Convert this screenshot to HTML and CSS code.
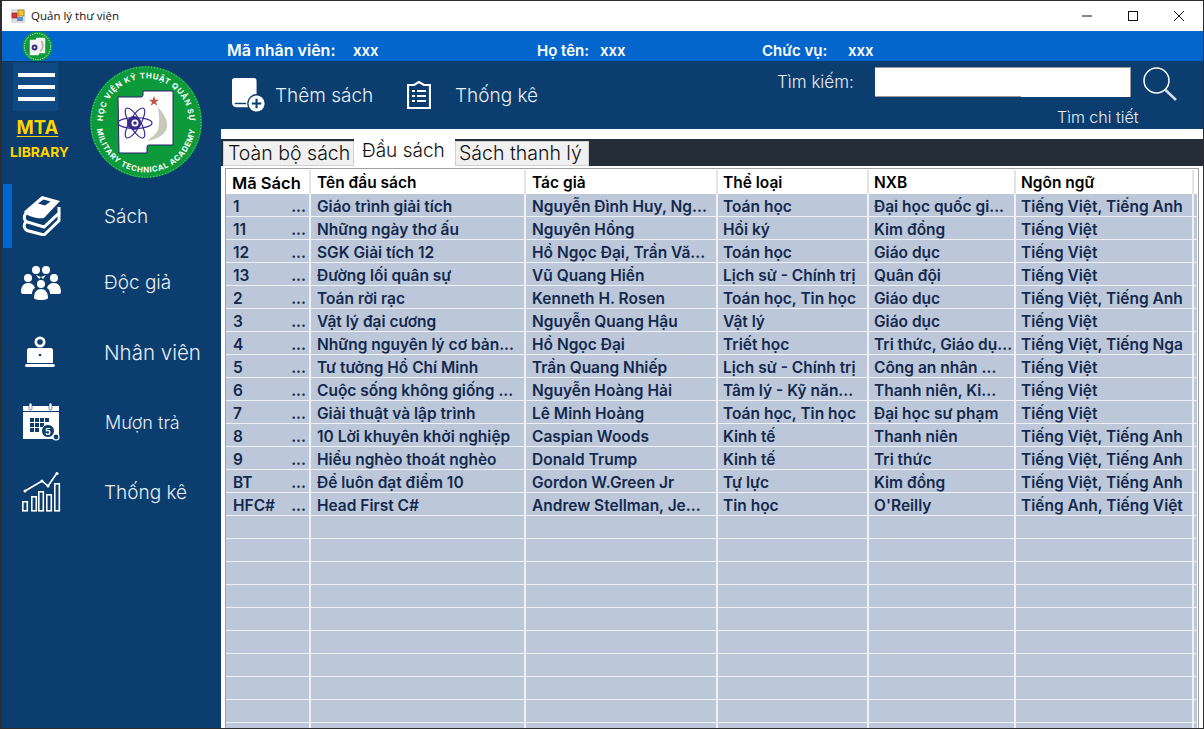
FILE: index.html
```html
<!DOCTYPE html>
<html lang="vi">
<head>
<meta charset="utf-8">
<title>Quản lý thư viện</title>
<link rel="stylesheet" href="styles.css">
</head>
<body>
<div class="window">
  <header class="titlebar">
    <svg class="app-icon" viewBox="0 0 14 14"><rect x="0" y="0" width="14" height="14" fill="#ddd"/><rect x="7" y="1" width="6" height="6" fill="#f2c12e" stroke="#8a6a10" stroke-width=".6"/><rect x="1" y="4" width="5" height="5" fill="#d33" stroke="#722" stroke-width=".6"/><rect x="6" y="8" width="6" height="4" fill="#5b8fd6"/></svg>
    <span class="title">Quản lý thư viện</span>
    <div class="controls">
      <svg viewBox="0 0 12 12"><path d="M1 6h10" stroke="#111" fill="none"/></svg>
      <svg viewBox="0 0 12 12"><rect x="1.5" y="1.5" width="9" height="9" stroke="#111" fill="none"/></svg>
      <svg viewBox="0 0 12 12"><path d="M1 1l10 10M11 1L1 11" stroke="#111" fill="none"/></svg>
    </div>
  </header>
  <div class="infobar">
    <svg class="mini-logo" viewBox="0 0 32 32"><circle cx="16" cy="16" r="15.5" fill="#0f9a3c"/><circle cx="16" cy="16" r="13.500" fill="none" stroke="#fff" stroke-width="1" stroke-dasharray="1 1.5"/><path d="M8 9h6l1-2h9v16h-6l-1 2H8z" fill="#f4f4f4"/><circle cx="13" cy="17" r="3" fill="#3c2a80"/><circle cx="13" cy="17" r="1" fill="#fff"/><path d="M20 10c2 3 2 8-1 11" stroke="#b8b8a8" stroke-width="2" fill="none"/></svg>
    <span class="info-label l1">Mã nhân viên:</span><span class="info-val v1">xxx</span>
    <span class="info-label l2">Họ tên:</span><span class="info-val v2">xxx</span>
    <span class="info-label l3">Chức vụ:</span><span class="info-val v3">xxx</span>
  </div>
  <div class="body">
    <aside class="sidebar">
      <div class="brandrow">
        <div class="brand">
          <div class="hamburger"><i></i><i></i><i></i></div>
          <div class="mta">MTA</div>
          <div class="library">LIBRARY</div>
        </div>
        <svg class="logo" viewBox="0 0 112 112">
          <defs>
            <path id="arcTop" d="M13.500 62A43 43 0 1 1 98.500 62"/>
            <path id="arcBot" d="M7 64A49.500 49.500 0 0 0 105 64"/>
          </defs>
          <circle cx="56" cy="56" r="56" fill="#0d9a3b"/>
          <circle cx="56" cy="56" r="55" fill="none" stroke="#fff" stroke-width=".6" stroke-dasharray=".8 2.2"/>
          <text class="logo-text"><textPath href="#arcTop" startOffset="50%" text-anchor="middle">HỌC VIỆN KỸ THUẬT QUÂN SỰ</textPath></text>
          <text class="logo-text"><textPath href="#arcBot" startOffset="50%" text-anchor="middle">MILITARY TECHNICAL ACADEMY</textPath></text>
          <path d="M28 31H51q2 0 2-2v-4H83V79H59q-2 0-2 2v6H29z" fill="#fff" stroke="#2e1f6e" stroke-width="1"/>
          <g fill="none" stroke="#3a2a8c" stroke-width="1.200">
            <ellipse cx="45" cy="57" rx="17" ry="5.500"/>
            <ellipse cx="45" cy="57" rx="17" ry="5.500" transform="rotate(60 45 57)"/>
            <ellipse cx="45" cy="57" rx="17" ry="5.500" transform="rotate(-60 45 57)"/>
          </g>
          <circle cx="44" cy="57" r="7" fill="#3a2a8c"/>
          <circle cx="45" cy="57" r="3.500" fill="#fff"/>
          <circle cx="45" cy="57" r="1.800" fill="#3a2a8c"/>
          <path d="M64 30l1.300 3.700h3.900l-3.200 2.300 1.200 3.800-3.200-2.300-3.200 2.300 1.200-3.800-3.200-2.300h3.900z" fill="#c0574a"/>
          <path d="M68 41c6 7 10 13 9 20-1 7-9 12-19 14 3-4 8-6 10-11 2-7 1-15 0-23z" fill="#c9c9ba"/>
        </svg>
      </div>
      <nav class="nav">
        <a class="nav-item active">
          <svg class="nav-icon" viewBox="0 0 40 40"><path d="M3 15.500L21 0l18 5-16 17C16 23 7 21 3 15.500z" fill="#fff"/><path d="M17 7.500l5.500-4 7 2-5.500 4z" fill="#0b3d6e"/><path d="M5 17c-3 4-2 7 1 9l17 5 15-14v-6" fill="none" stroke="#fff" stroke-width="3"/><path d="M5 25.500c-3 4-2 7 1 9l17 4.500 15-14.500V17" fill="none" stroke="#fff" stroke-width="3"/></svg>
          <span>Sách</span>
        </a>
        <a class="nav-item">
          <svg class="nav-icon" viewBox="0 0 40 36"><g fill="#fff"><circle cx="15" cy="6" r="4"/><circle cx="25" cy="6" r="4"/><circle cx="7" cy="14" r="4"/><circle cx="33" cy="14" r="4"/><circle cx="20" cy="20" r="4"/><path d="M0 28c0-6 3-9 7-9s6 2 7 5c-2 1-3 3-3 6H2c-1 0-2-1-2-2z"/><path d="M40 28c0-6-3-9-7-9s-6 2-7 5c2 1 3 3 3 6h9c1 0 2-1 2-2z"/><path d="M13 34c0-6 3-9 7-9s7 3 7 9c0 1-3 2-7 2s-7-1-7-2z"/><path d="M15 11l3 4 2-2z"/><path d="M25 11l-3 4-2-2z"/></g></svg>
          <span>Độc giả</span>
        </a>
        <a class="nav-item nav-staff">
          <svg class="nav-icon" viewBox="0 0 40 40"><g fill="#fff"><circle cx="19" cy="10" r="5.500"/><path d="M8 16h22c1 0 2 1 2 2v13H6V18c0-1 1-2 2-2z"/><path d="M6 32h26c1 0 2 1 2 1.500S33 35 32 35H6c-1 0-2-.5-2-1.500S5 32 6 32z"/></g><circle cx="19" cy="10" r="2.800" fill="#0b3d6e"/><circle cx="19" cy="23" r="1.300" fill="#0b3d6e"/></svg>
          <span>Nhân viên</span>
        </a>
        <a class="nav-item nav-muon">
          <svg class="nav-icon" viewBox="0 0 40 40"><path d="M2 4h36v12H2z" fill="#fff"/><path d="M2 10h36v27H2z" fill="#fff"/><path d="M2 9.500h36" stroke="#0b3d6e"/><rect x="8" y="1" width="3" height="7" rx="1.500" fill="#fff" stroke="#0b3d6e" stroke-width=".6"/><rect x="28" y="1" width="3" height="7" rx="1.500" fill="#fff" stroke="#0b3d6e" stroke-width=".6"/><g fill="#0b3d6e"><rect x="9" y="16" width="4" height="4"/><rect x="14" y="16" width="4" height="4"/><rect x="19" y="16" width="4" height="4"/><rect x="24" y="16" width="4" height="4"/><rect x="9" y="21" width="4" height="4"/><rect x="14" y="21" width="4" height="4"/><rect x="19" y="21" width="4" height="4"/><rect x="9" y="26" width="4" height="4"/><rect x="14" y="26" width="4" height="4"/></g><circle cx="27" cy="29" r="6.500" fill="#0b3d6e" stroke="#fff"/><circle cx="35" cy="35" r="3" fill="#0b3d6e" stroke="#fff" stroke-width="1.200"/><text x="27" y="32.500" class="cal-num">5</text></svg>
          <span>Mượn trả</span>
        </a>
        <a class="nav-item">
          <svg class="nav-icon" viewBox="0 0 40 40"><g fill="none" stroke="#fff" stroke-width="1.600"><rect x="1.800" y="29.800" width="4.500" height="9"/><rect x="10.800" y="24.800" width="4.500" height="14"/><rect x="17.800" y="19.800" width="4.500" height="19"/><rect x="25.800" y="22.800" width="4.500" height="16"/><rect x="33.800" y="11.800" width="4.500" height="27"/><path d="M4 19l17-10 6 5 9-13"/></g><g fill="#fff"><circle cx="4" cy="19" r="1.500"/><circle cx="21" cy="9" r="1.500"/><circle cx="27" cy="14" r="1.500"/><circle cx="36" cy="1.500" r="1.500"/></g></svg>
          <span>Thống kê</span>
        </a>
      </nav>
    </aside>
    <main class="main">
      <div class="toolbar">
        <a class="tool tool-add">
          <svg class="tool-icon" viewBox="0 0 36 36"><path d="M3 0h20c2 0 3 1 3 3v14a10 10 0 0 0-9 14H5c-3 0-5-2-5-5V3c0-2 1-3 3-3z" fill="#fff"/><path d="M3 27h12" stroke="#0b3d6e" stroke-width="1.500"/><circle cx="26" cy="27" r="8.500" fill="#fff"/><path d="M26 22v10M21 27h10" stroke="#0b3d6e" stroke-width="2.200"/></svg>
          <span>Thêm sách</span>
        </a>
        <a class="tool">
          <svg class="tool-icon clip" viewBox="0 0 24 28"><path d="M1 4h6l5-3 5 3h6v23H1z" fill="none" stroke="#fff" stroke-width="2.200"/><g fill="#fff"><rect x="5" y="9" width="3" height="2"/><rect x="10" y="9" width="9" height="2"/><rect x="5" y="14" width="3" height="2"/><rect x="10" y="14" width="9" height="2"/><rect x="5" y="19" width="3" height="2"/><rect x="10" y="19" width="9" height="2"/></g></svg>
          <span>Thống kê</span>
        </a>
        <div class="search">
          <div class="search-row">
            <label>Tìm kiếm:</label>
            <div class="search-input"></div>
            <svg class="search-icon" viewBox="0 0 34 34"><circle cx="13.500" cy="13.500" r="12.500" fill="none" stroke="#fff" stroke-width="1.500"/><path d="M22 22.500L33 33" stroke="#d6dde6" stroke-width="2.500"/></svg>
          </div>
          <div class="search-more">Tìm chi tiết</div>
        </div>
      </div>
      <div class="whitegap"></div>
      <div class="tabs">
        <span class="tab">Toàn bộ sách</span>
        <span class="tab selected">Đầu sách</span>
        <span class="tab">Sách thanh lý</span>
      </div>
      <div class="panel">
        <div class="grid">
          <div class="row head"><div>Mã Sách</div><div>Tên đầu sách</div><div>Tác giả</div><div>Thể loại</div><div>NXB</div><div>Ngôn ngữ</div></div>
          <div class="row"><div class="id"><b>1</b><i>...</i></div><div>Giáo trình giải tích</div><div>Nguyễn Đình Huy, Ng...</div><div>Toán học</div><div>Đại học quốc gi...</div><div>Tiếng Việt, Tiếng Anh</div></div>
          <div class="row"><div class="id"><b>11</b><i>...</i></div><div>Những ngày thơ ấu</div><div>Nguyên Hồng</div><div>Hồi ký</div><div>Kim đồng</div><div>Tiếng Việt</div></div>
          <div class="row"><div class="id"><b>12</b><i>...</i></div><div>SGK Giải tích 12</div><div>Hồ Ngọc Đại, Trần Vă...</div><div>Toán học</div><div>Giáo dục</div><div>Tiếng Việt</div></div>
          <div class="row"><div class="id"><b>13</b><i>...</i></div><div>Đường lối quân sự</div><div>Vũ Quang Hiển</div><div>Lịch sử - Chính trị</div><div>Quân đội</div><div>Tiếng Việt</div></div>
          <div class="row"><div class="id"><b>2</b><i>...</i></div><div>Toán rời rạc</div><div>Kenneth H. Rosen</div><div>Toán học, Tin học</div><div>Giáo dục</div><div>Tiếng Việt, Tiếng Anh</div></div>
          <div class="row"><div class="id"><b>3</b><i>...</i></div><div>Vật lý đại cương</div><div>Nguyễn Quang Hậu</div><div>Vật lý</div><div>Giáo dục</div><div>Tiếng Việt</div></div>
          <div class="row"><div class="id"><b>4</b><i>...</i></div><div>Những nguyên lý cơ bản...</div><div>Hồ Ngọc Đại</div><div>Triết học</div><div>Tri thức, Giáo dụ...</div><div>Tiếng Việt, Tiếng Nga</div></div>
          <div class="row"><div class="id"><b>5</b><i>...</i></div><div>Tư tưởng Hồ Chí Minh</div><div>Trần Quang Nhiếp</div><div>Lịch sử - Chính trị</div><div>Công an nhân ...</div><div>Tiếng Việt</div></div>
          <div class="row"><div class="id"><b>6</b><i>...</i></div><div>Cuộc sống không giống ...</div><div>Nguyễn Hoàng Hải</div><div>Tâm lý - Kỹ năn...</div><div>Thanh niên, Ki...</div><div>Tiếng Việt</div></div>
          <div class="row"><div class="id"><b>7</b><i>...</i></div><div>Giải thuật và lập trình</div><div>Lê Minh Hoàng</div><div>Toán học, Tin học</div><div>Đại học sư phạm</div><div>Tiếng Việt</div></div>
          <div class="row"><div class="id"><b>8</b><i>...</i></div><div>10 Lời khuyên khởi nghiệp</div><div>Caspian Woods</div><div>Kinh tế</div><div>Thanh niên</div><div>Tiếng Việt, Tiếng Anh</div></div>
          <div class="row"><div class="id"><b>9</b><i>...</i></div><div>Hiểu nghèo thoát nghèo</div><div>Donald Trump</div><div>Kinh tế</div><div>Tri thức</div><div>Tiếng Việt, Tiếng Anh</div></div>
          <div class="row"><div class="id"><b>BT</b><i>...</i></div><div>Để luôn đạt điểm 10</div><div>Gordon W.Green Jr</div><div>Tự lực</div><div>Kim đồng</div><div>Tiếng Việt, Tiếng Anh</div></div>
          <div class="row"><div class="id"><b>HFC#</b><i>...</i></div><div>Head First C#</div><div>Andrew Stellman, Je...</div><div>Tin học</div><div>O'Reilly</div><div>Tiếng Anh, Tiếng Việt</div></div>
          <div class="row"><div></div><div></div><div></div><div></div><div></div><div></div></div>
          <div class="row"><div></div><div></div><div></div><div></div><div></div><div></div></div>
          <div class="row"><div></div><div></div><div></div><div></div><div></div><div></div></div>
          <div class="row"><div></div><div></div><div></div><div></div><div></div><div></div></div>
          <div class="row"><div></div><div></div><div></div><div></div><div></div><div></div></div>
          <div class="row"><div></div><div></div><div></div><div></div><div></div><div></div></div>
          <div class="row"><div></div><div></div><div></div><div></div><div></div><div></div></div>
          <div class="row"><div></div><div></div><div></div><div></div><div></div><div></div></div>
          <div class="row"><div></div><div></div><div></div><div></div><div></div><div></div></div>
          <div class="row"><div></div><div></div><div></div><div></div><div></div><div></div></div>
        </div>
      </div>
    </main>
  </div>
</div>
</body>
</html>
```
FILE: styles.css
```css
* { box-sizing: border-box; }
html, body { margin: 0; padding: 0; height: 100%; overflow: hidden; }
body { font-family: "Inter", "Liberation Sans", sans-serif; background: #fff; }
.window { width: 1204px; height: 729px; display: flex; flex-direction: column; border: 1px solid #2d2d2d; border-width: 1px 1px 1px 2px; overflow: hidden; background: #fff; }
.titlebar { height: 30px; flex: none; background: #fff; display: flex; align-items: center; padding: 0 0 1px 9px; }
.app-icon { width: 14px; height: 14px; }
.title { margin-left: 6px; font: 11.500px "Open Sans", sans-serif; color: #111; }
.controls { margin-left: auto; display: flex; gap: 34px; padding-right: 18px; }
.controls svg { width: 12px; height: 12px; }
.infobar { height: 30px; flex: none; background: #0366cc; display: flex; align-items: center; color: #fff; font-weight: 600; font-size: 15px; padding-left: 20px; }
.mini-logo { width: 31px; height: 31px; flex: none; }
.info-label, .info-val { white-space: nowrap; padding-top: 8px; }
.l1 { margin-left: 174px; width: 126px; font-size: 16px; }
.v1 { width: 184px; }
.l2 { width: 63px; }
.v2 { width: 162px; }
.l3 { width: 86px; }
.body { flex: 1; display: flex; min-height: 0; }
.sidebar { width: 219px; flex: none; background: #0b3d6e; display: flex; flex-direction: column; }
.brandrow { height: 123px; display: flex; flex: none; }
.brand { width: 88px; padding: 2px 0 0 11px; }
.hamburger { width: 45px; height: 48px; background: #0f4a85; display: flex; flex-direction: column; gap: 8px; padding: 10px 3px 0 5px; }
.hamburger i { display: block; height: 4px; background: #fff; }
.mta { width: 49px; margin-top: 4px; text-align: center; font-size: 18.500px; font-weight: 700; line-height: 24px; color: #ffd400; text-decoration: underline; text-underline-offset: 2px; }
.library { margin: 5px 0 0 -3px; font-size: 13.800px; font-weight: 700; line-height: 17px; color: #ffd400; }
.logo { width: 112px; height: 112px; margin-top: 5px; flex: none; }
.logo-text { font: 700 7.800px "Inter", sans-serif; fill: #fff; letter-spacing: .65px; }
.cal-num { font: 700 9px "Inter", sans-serif; fill: #fff; text-anchor: middle; }
.nav { display: flex; flex-direction: column; }
.nav-item { height: 70px; display: flex; align-items: center; padding-left: 19px; color: #e8eef5; font-size: 19px; font-weight: 300; position: relative; }
.nav-item:first-child { height: 64px; }
.nav-item:nth-child(2) { height: 68px; }
.nav-item:nth-child(3) { height: 72px; }
.nav-item:nth-child(4) { height: 68px; }
.nav-item:nth-child(5) { height: 72px; }
.nav-item span { margin-left: 43px; }
.nav-staff { font-size: 20.500px; }
.nav-muon { font-size: 18px; }
.nav-muon span { margin-left: 44px; }
.nav-item.active::before { content: ""; position: absolute; left: 1px; top: 0; width: 9px; height: 100%; background: #0366cc; }
.nav-icon { width: 40px; height: 40px; flex: none; }
.main { flex: 1; min-width: 0; display: flex; flex-direction: column; }
.toolbar { height: 68px; flex: none; background: #0b3d6e; display: flex; padding: 0 0 0 11px; position: relative; color: #e8eef5; font-weight: 300; }
.tool { display: flex; align-items: center; font-size: 19px; height: 68px; }
.tool-add { width: 175px; }
.tool-icon { width: 34px; height: 34px; flex: none; margin-right: 9px; }
.tool-icon.clip { width: 24px; height: 28px; margin-right: 24px; }
.search { position: absolute; left: 556px; top: 6px; width: 400px; }
.search-row { display: flex; align-items: center; height: 30px; font-size: 17px; }
.search-row label { width: 98px; }
.search-input { width: 256px; height: 30px; background: linear-gradient(#999, #999) no-repeat left bottom / 146px 1px, #fff; border-right: 1px solid #999; border-top: 1px solid #999; }
.search-icon { width: 34px; height: 34px; margin: 4px 0 0 12px; flex: none; }
.search-more { margin: 10px 0 0 280px; font-size: 16px; line-height: 20px; white-space: nowrap; }
.whitegap { height: 10px; flex: none; background: #fff; }
.tabs { height: 27px; flex: none; background: #252d38; display: flex; align-items: flex-end; padding-left: 2px; font-weight: 300; }
.tab { height: 25px; padding: 0 4px; background: #f0f0f0; border: 1px solid #d0d0d0; font-size: 19.500px; line-height: 23px; color: #111; white-space: nowrap; display: block; }
.tab:nth-child(1) { width: 131px; }
.tab:nth-child(3) { width: 134px; padding-left: 3px; }
.tab.selected { width: 101px; height: 28px; margin-bottom: -1px; background: #fff; border: 0; font-size: 19px; line-height: 24px; padding: 0 0 0 8px; position: relative; }
.panel { flex: 1; min-height: 0; background: #fff; padding: 2px 4px 0 4px; overflow: hidden; }
.grid { height: 100%; border: solid #a0a0a0; border-width: 1px 1px 0 1px; padding: 1px 1px 0 0; overflow: hidden; background: #fff; }
.row { display: grid; grid-template-columns: 85px 215px 192px 151px 147px 178px 4px; height: 23px; background: #bcc8d9; border-bottom: 1px solid #eef1f5; color: #14294d; font-size: 15.500px; font-weight: 600; line-height: 25px; }
.row > div { border-right: 2px solid #eef1f5; padding-left: 6px; white-space: nowrap; overflow: hidden; }
.row > div:nth-child(n+4) { padding-left: 5px; }
.row.head { height: 24px; background: #fff; border-bottom: 0; color: #000; font-size: 15.500px; line-height: 26px; }
.row.head > div { border-right-color: #e4e4e4; }
.row.head > div:first-child { font-size: 16.500px; }
.id { display: flex; justify-content: space-between; padding: 0 3px 0 7px; }
.row > .id { padding-left: 7px; }
.id b, .id i { font-weight: 600; font-style: normal; }
```
